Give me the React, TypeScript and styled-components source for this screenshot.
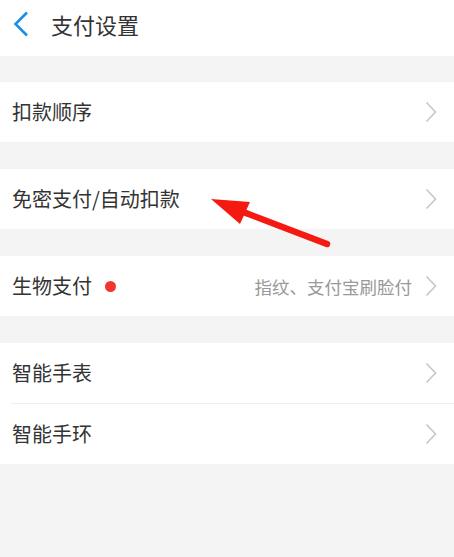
import styled, { createGlobalStyle } from 'styled-components';

const GlobalStyle = createGlobalStyle`
  html, body {
    margin: 0;
    padding: 0;
    background: #f4f4f4;
    font-family: "Noto Sans CJK SC", "Noto Sans", sans-serif;
  }
`;

const Page = styled.div`
  position: relative;
  width: 454px;
  height: 557px;
  background: #f4f4f4;
  overflow: hidden;
`;

const Header = styled.div`
  box-sizing: border-box;
  display: flex;
  align-items: center;
  height: 56px;
  background: #fff;
  padding: 0 0 8px 13px;
  margin-bottom: 25.5px;
`;

const Back = styled.div`
  display: flex;
  align-items: center;
  width: 38px;
`;

const Title = styled.h1`
  margin: 0;
  font-size: 22px;
  font-weight: 400;
  color: #333;
`;

const Group = styled.div`
  background: #fff;
  margin-bottom: 26.7px;
`;

const Row = styled.div<{ $divider?: boolean }>`
  position: relative;
  display: flex;
  align-items: center;
  height: 60.5px;
  padding: 0 17px 0 12px;

  ${({ $divider }) =>
    $divider &&
    `
    &::after {
      content: '';
      position: absolute;
      left: 11px;
      right: 0;
      bottom: 0;
      height: 1px;
      background: #efefef;
    }
  `}
`;

const Label = styled.span`
  font-size: 20px;
  color: #333;
  line-height: 1;
`;

const Dot = styled.span`
  width: 11px;
  height: 11px;
  border-radius: 50%;
  background: #f4352f;
  margin-left: 13px;
`;

const Detail = styled.span`
  margin-left: auto;
  font-size: 17.5px;
  color: #999;
  margin-right: 13px;
`;

const Chevron = styled.svg<{ $auto?: boolean }>`
  margin-left: ${({ $auto }) => ($auto ? 'auto' : '0')};
  flex-shrink: 0;
`;

const Arrow = styled.svg`
  position: absolute;
  left: 0;
  top: 0;
  pointer-events: none;
`;

function RightChevron({ auto }: { auto?: boolean }) {
  return (
    <Chevron $auto={auto} width="12" height="22" viewBox="0 0 12 22">
      <path d="M1.5 1.5 L10.5 11 L1.5 20.5" fill="none" stroke="#c7c7c7" strokeWidth="1.6" />
    </Chevron>
  );
}

export default function App() {
  return (
    <Page>
      <GlobalStyle />
      <Header>
        <Back>
          <svg width="16" height="26" viewBox="0 0 16 26">
            <path d="M14 1.5 L2.5 13 L14 24.5" fill="none" stroke="#1b8fe6" strokeWidth="2.6" />
          </svg>
        </Back>
        <Title>支付设置</Title>
      </Header>

      <Group>
        <Row>
          <Label>扣款顺序</Label>
          <RightChevron auto />
        </Row>
      </Group>

      <Group>
        <Row>
          <Label>免密支付/自动扣款</Label>
          <RightChevron auto />
        </Row>
      </Group>

      <Group>
        <Row>
          <Label>生物支付</Label>
          <Dot />
          <Detail>指纹、支付宝刷脸付</Detail>
          <RightChevron />
        </Row>
      </Group>

      <Group>
        <Row $divider>
          <Label>智能手表</Label>
          <RightChevron auto />
        </Row>
        <Row>
          <Label>智能手环</Label>
          <RightChevron auto />
        </Row>
      </Group>

      <Arrow width="454" height="557" viewBox="0 0 454 557">
        <line x1="327" y1="244" x2="238" y2="210" stroke="#f41a12" strokeWidth="6.5" strokeLinecap="round" />
        <polygon points="211,199 250,202 240,224" fill="#f41a12" />
      </Arrow>
    </Page>
  );
}
